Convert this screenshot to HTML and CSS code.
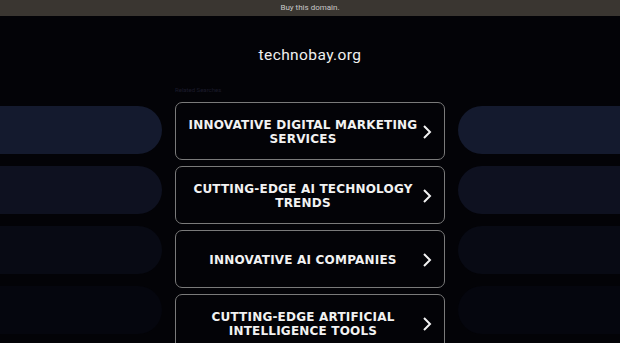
FILE: index.html
```html
<!DOCTYPE html>
<html lang="en">
<head>
    <meta charset="UTF-8">
    <meta name="viewport" content="width=device-width, initial-scale=1.0">
    <title>technobay.org</title>
    <link rel="stylesheet" href="styles.css">
</head>
<body>
    <div class="topbar">Buy this domain.</div>

    <h1 class="domain">technobay.org</h1>

    <div class="layout">
        <div class="side side-left">
            <div class="pill p1"></div>
            <div class="pill p2"></div>
            <div class="pill p3"></div>
            <div class="pill p4"></div>
        </div>

        <div class="main">
            <div class="related">Related Searches</div>
            <a class="link-card" href="#">
                <span class="label">Innovative Digital Marketing Services</span>
                <svg class="chevron" viewBox="0 0 10 16"><path d="M2 2l6 6-6 6"/></svg>
            </a>
            <a class="link-card" href="#">
                <span class="label">Cutting-Edge AI Technology Trends</span>
                <svg class="chevron" viewBox="0 0 10 16"><path d="M2 2l6 6-6 6"/></svg>
            </a>
            <a class="link-card" href="#">
                <span class="label">Innovative AI Companies</span>
                <svg class="chevron" viewBox="0 0 10 16"><path d="M2 2l6 6-6 6"/></svg>
            </a>
            <a class="link-card" href="#">
                <span class="label">Cutting-Edge Artificial Intelligence Tools</span>
                <svg class="chevron" viewBox="0 0 10 16"><path d="M2 2l6 6-6 6"/></svg>
            </a>
        </div>

        <div class="side side-right">
            <div class="pill p1"></div>
            <div class="pill p2"></div>
            <div class="pill p3"></div>
            <div class="pill p4"></div>
        </div>
    </div>
</body>
</html>
```

FILE: styles.css
```css
body {
    margin: 0;
    background-color: #030307;
    font-family: 'Roboto', 'Liberation Sans', sans-serif;
    color: #eee;
    overflow: hidden;
}

.topbar {
    height: 16px;
    line-height: 16px;
    background: #3a3631;
    color: #c8c8c8;
    font-size: 8px;
    text-align: center;
}

.domain {
    margin: 0;
    padding-top: 29px;
    height: 20px;
    line-height: 20px;
    font-size: 15.5px;
    font-weight: 400;
    letter-spacing: 0.4px;
    text-align: center;
    color: #f0f0f0;
}

.layout {
    display: flex;
    justify-content: center;
    gap: 13px;
    padding-top: 21px;
}

.side {
    width: 162px;
    display: flex;
    flex-direction: column;
    gap: 12px;
    padding-top: 20px;
}

.pill {
    height: 48px;
}

.side-left .pill {
    border-radius: 0 24px 24px 0;
}

.side-right .pill {
    border-radius: 24px 0 0 24px;
}

.p1 { background: #141a2e; }
.p2 { background: #0e1120; }
.p3 { background: #080a14; }
.p4 { background: #05060e; }

.main {
    width: 270px;
    display: flex;
    flex-direction: column;
    gap: 6px;
}

.related {
    height: 10px;
    font-size: 6px;
    color: #1c1c2c;
}

.link-card {
    box-sizing: border-box;
    height: 58px;
    display: flex;
    align-items: center;
    padding: 2px 12px 0 12px;
    border: 1.5px solid #7a7a7a;
    border-radius: 7px;
    text-decoration: none;
    color: #f2f2f2;
}

.label {
    flex: 1;
    text-align: center;
    font-family: 'DejaVu Sans', sans-serif;
    font-weight: bold;
    font-size: 12px;
    line-height: 14px;
    letter-spacing: 0.2px;
    text-transform: uppercase;
}

.chevron {
    width: 10px;
    height: 16px;
    margin-left: 4px;
    fill: none;
    stroke: #f2f2f2;
    stroke-width: 2;
}
```
